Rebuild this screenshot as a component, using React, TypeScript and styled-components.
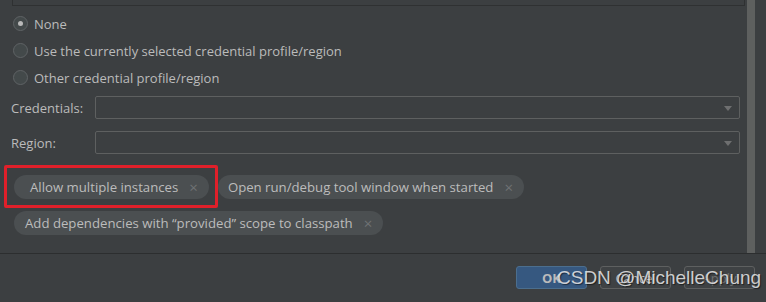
import React from 'react';
import styled, { createGlobalStyle } from 'styled-components';

const GlobalStyle = createGlobalStyle`
  html, body {
    margin: 0;
    padding: 0;
    background: #3c3f41;
  }
  body {
    font-family: "Open Sans", "Noto Sans", sans-serif;
    font-size: 13px;
    color: #bbbbbb;
  }
`;

const Dialog = styled.div`
  width: 766px;
  height: 302px;
  display: flex;
  flex-direction: column;
  background: #3c3f41;
  overflow: hidden;
`;

const Body = styled.div`
  height: 253px;
  display: flex;
`;

const Content = styled.div`
  flex: 1;
  display: flex;
  flex-direction: column;
  padding-left: 11px;
`;

const Scrollbar = styled.div`
  width: 8px;
  margin: 0 11px 0 5px;
  background: #5e605f;
`;

const TopBox = styled.div`
  height: 5px;
  margin: 0 -3px 0 1px;
  border: 1px solid #2f3132;
  border-top: none;
`;

const RadioList = styled.div`
  display: flex;
  flex-direction: column;
  margin-top: 4px;
`;

const RadioRow = styled.label`
  height: 27px;
  display: flex;
  align-items: center;
  gap: 6px;
  padding-left: 2px;
`;

const RadioCircle = styled.span<{ $checked?: boolean }>`
  width: 13px;
  height: 13px;
  border-radius: 50%;
  border: 1px solid #5f6365;
  background: #43494a;
  display: flex;
  align-items: center;
  justify-content: center;

  &::after {
    content: '';
    width: 5px;
    height: 5px;
    border-radius: 50%;
    background: #b9b9b9;
    display: ${(p) => (p.$checked ? 'block' : 'none')};
  }
`;

const FieldRow = styled.div`
  display: flex;
  align-items: center;
  height: 23px;
  margin-top: ${(p: { $top: number }) => p.$top}px;
`;

const FieldLabel = styled.span`
  width: 84px;
`;

const Combo = styled.div`
  flex: 1;
  height: 21px;
  margin-right: 2px;
  border: 1px solid #5e6060;
  border-radius: 2px;
  display: flex;
  align-items: center;
  justify-content: flex-end;
  padding-right: 7px;
`;

const Arrow = styled.span`
  width: 0;
  height: 0;
  border-left: 4.5px solid transparent;
  border-right: 4.5px solid transparent;
  border-top: 5px solid #6e6f70;
  margin-top: 1px;
`;

const Chips = styled.div`
  display: flex;
  flex-wrap: wrap;
  gap: 12px 9px;
  margin-top: 21px;
  padding-left: 3px;
  width: 540px;
`;

const ChipWrap = styled.div`
  position: relative;
`;

const Chip = styled.div<{ $padLeft: number }>`
  height: 24px;
  border-radius: 12px;
  background: #4b4f51;
  display: flex;
  align-items: center;
  padding-left: ${(p) => p.$padLeft}px;
  padding-right: 11px;
  white-space: nowrap;
  color: #bcbcbc;
  font-size: 13.2px;
`;

const Close = styled.span`
  margin-left: 11px;
  color: #6f7274;
  font-size: 15px;
  line-height: 1;
`;

const Highlight = styled.div`
  position: absolute;
  left: -10px;
  top: -10px;
  right: -9px;
  bottom: -9px;
  border: 3px solid #e0202a;
  border-radius: 2px;
  pointer-events: none;
`;

const Separator = styled.div`
  height: 1px;
  background: #2c2e2f;
`;

const Footer = styled.div`
  position: relative;
  flex: 1;
  display: flex;
  justify-content: flex-end;
  align-items: flex-start;
  gap: 13px;
  padding: 12px 11px 0 0;
`;

const Button = styled.button<{ $primary?: boolean; $disabled?: boolean }>`
  width: 71px;
  height: 23px;
  border-radius: 3px;
  border: 1px solid ${(p) => (p.$primary ? '#4b6e8e' : '#5e6060')};
  background: ${(p) => (p.$primary ? '#365880' : '#3f4244')};
  color: ${(p) => (p.$disabled ? '#6f7071' : '#bbbbbb')};
  font-family: "Open Sans", "Noto Sans", sans-serif;
  font-size: 13px;
  font-weight: ${(p) => (p.$primary ? 700 : 400)};
  padding: 0;
`;

const Watermark = styled.div`
  position: absolute;
  left: 557px;
  top: 13px;
  font-family: "Liberation Sans", Arial, sans-serif;
  font-size: 19px;
  color: rgba(235, 235, 235, 0.85);
  text-shadow: 1px 1px 1px rgba(0, 0, 0, 0.5);
  white-space: nowrap;
  pointer-events: none;
`;

const radios = [
  { label: 'None', checked: true },
  { label: 'Use the currently selected credential profile/region' },
  { label: 'Other credential profile/region' },
];

export default function App() {
  return (
    <>
      <GlobalStyle />
      <Dialog>
        <Body>
          <Content>
            <TopBox />
            <RadioList>
              {radios.map((r) => (
                <RadioRow key={r.label}>
                  <RadioCircle $checked={r.checked} />
                  {r.label}
                </RadioRow>
              ))}
            </RadioList>
            <FieldRow $top={5}>
              <FieldLabel>Credentials:</FieldLabel>
              <Combo>
                <Arrow />
              </Combo>
            </FieldRow>
            <FieldRow $top={12}>
              <FieldLabel>Region:</FieldLabel>
              <Combo>
                <Arrow />
              </Combo>
            </FieldRow>
            <Chips>
              <ChipWrap>
                <Chip $padLeft={16}>
                  Allow multiple instances<Close>×</Close>
                </Chip>
                <Highlight />
              </ChipWrap>
              <Chip $padLeft={10}>
                Open run/debug tool window when started<Close>×</Close>
              </Chip>
              <Chip $padLeft={11}>
                Add dependencies with “provided” scope to classpath<Close>×</Close>
              </Chip>
            </Chips>
          </Content>
          <Scrollbar />
        </Body>
        <Separator />
        <Footer>
          <Button $primary>OK</Button>
          <Button>Cancel</Button>
          <Button $disabled>Apply</Button>
          <Watermark>CSDN @MichelleChung</Watermark>
        </Footer>
      </Dialog>
    </>
  );
}
